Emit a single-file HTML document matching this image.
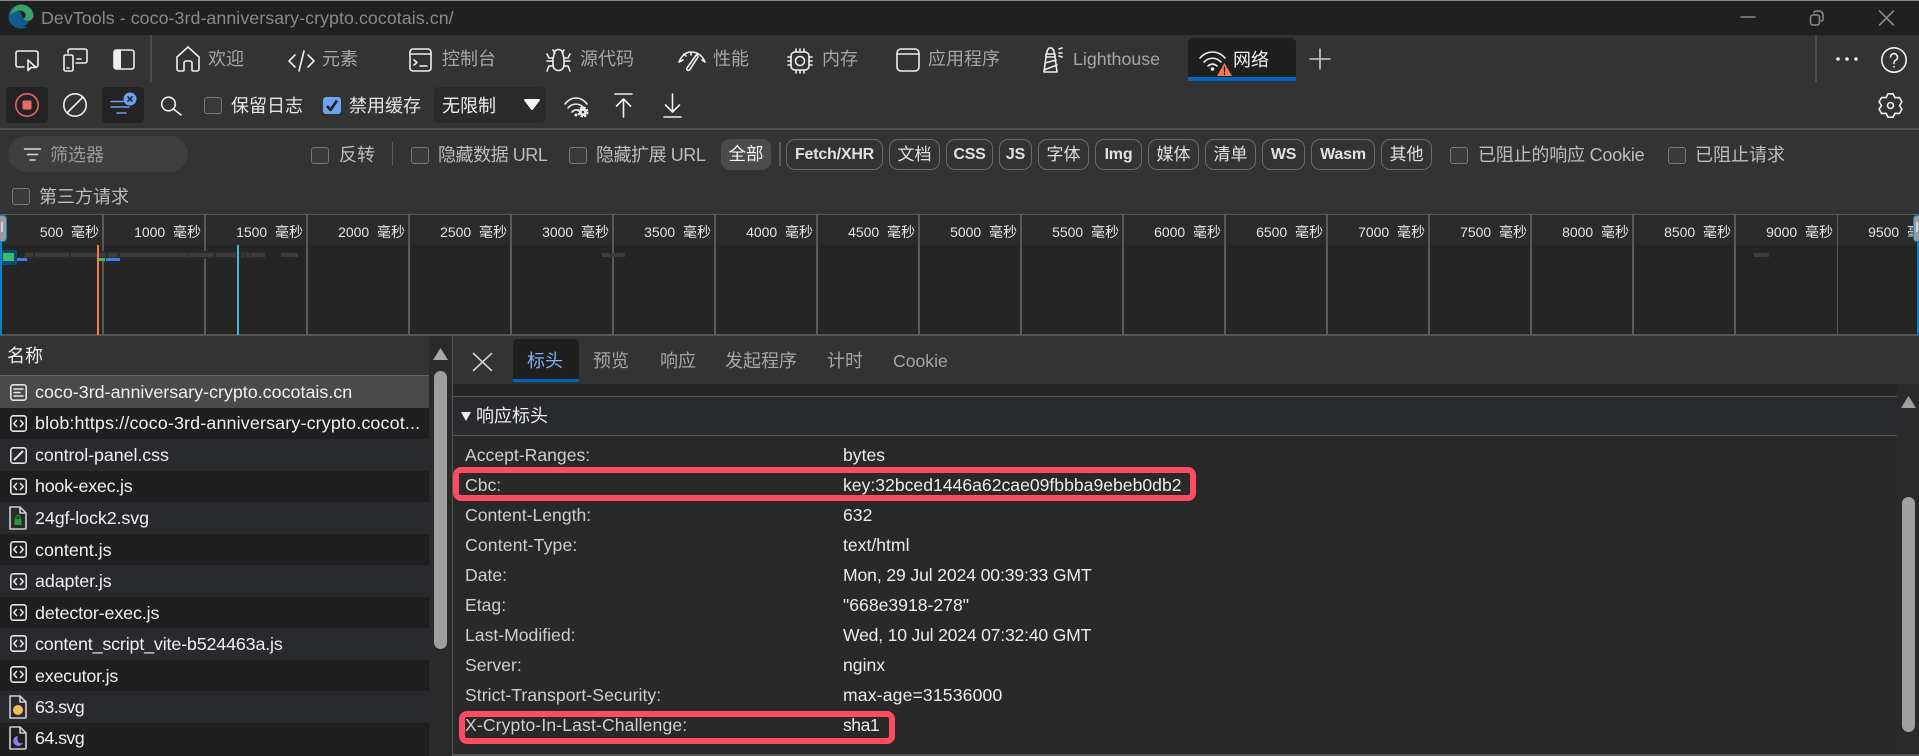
<!DOCTYPE html>
<html lang="zh"><head><meta charset="utf-8"><title>DevTools</title>
<style>
html,body{margin:0;padding:0;width:1919px;height:756px;overflow:hidden;background:#333}
body{position:relative;font-family:"Liberation Sans","Noto Sans CJK SC",sans-serif;font-size:18px;color:#e6e6e6}
div,span,svg{position:absolute;box-sizing:border-box}
span{white-space:pre;line-height:24px;height:24px}
span b{position:static;font-weight:normal}
svg{overflow:visible;fill:none;stroke:#eee;stroke-width:1.6;stroke-linecap:round;stroke-linejoin:round}
.g{color:#a6a6a6}.f{color:#bdbdbd}
.c{width:18px;height:17px;border:1.6px solid #7a7a7a;border-radius:3px;background:#3a3a3a}
.p{top:139px;height:31px;border:1px solid #6a6a6a;border-radius:9px;text-align:center;line-height:30px;color:#e0e0e0;font-size:17px;white-space:nowrap}
.pb{font-weight:bold;font-size:16px;letter-spacing:-.2px}
.v{top:215px;height:120px;width:2px;background:#5a5a5a}
.l{top:220px;width:100px;margin-left:-1px;text-align:right;font-size:14px;color:#e4e4e4;line-height:24px}
.b{top:253px;height:4px;background:#3c3c3c}
.r{left:0;width:429px;height:32px}
.n{left:35px;color:#f0f0f0;font-size:17.9px}
.k{left:465px;color:#cfcfcf;font-size:17.6px}
.w{left:843px;color:#ececec;font-size:17.6px}
.hl{border:6px solid #fb4c62;border-radius:8px}
</style></head><body>

<!-- title bar -->
<div style="left:0;top:0;width:1919px;height:35px;background:#202020;border-top:1px solid #8a8a8a"></div>
<svg style="left:8px;top:4px;stroke:none" width="26" height="25" viewBox="0 0 26 25">
<path fill="#0f5f8e" d="M13 .5C5.500 .5 .7 6 .5 12.500 .5 19.500 6.500 24.500 13 24.500c3 0 5.500-.8 7.500-2.300-4.500 1.500-10.500-.2-12-5.200-1-3.500 1-7 4-8.500C10 5.500 5 7 2.500 11 4 5 8.500 .5 13 .5z"/>
<path fill="#3aa06a" d="M13 .5c6.500 0 12 4.500 12.500 11 .2 3-2.500 5.500-6 5.500-2.200 0-4-1-4.500-2.500 2-.5 3-2 2.500-4C16.500 7 12 5.500 8 7.500 5 9 3 10 2 12 3 6 7.500 .5 13 .5z"/>
<path fill="#155a8a" d="M8.500 17c-1-3.500 1-7 4-8.500 1.500 1.500 1.500 4 2.500 6 1 1.500 3 2.500 5.500 2.500-1 3-3 5-6 5.500-3 .5-5.500-2.500-6-5.500z"/>
</svg>
<span style="left:41px;top:6px;color:#8a8a8a;font-size:17.8px;letter-spacing:.07px">DevTools - coco-3rd-anniversary-crypto.cocotais.cn/</span>
<svg style="left:1741px;top:10px;stroke:#8a8a8a" width="160" height="16" viewBox="0 0 160 16">
<path d="M0 7H14"/><rect x="69.500" y="5" width="9" height="10" rx="2.500"/><path d="M73 2.500c0-1 1-1.500 2-1.500h3c2 0 4 1.500 4 4v4c0 1-.5 2-1.500 2"/><path d="M138.500 1 152.500 15M152.500 1 138.500 15"/>
</svg>

<!-- tab bar -->
<div style="left:0;top:35px;width:1919px;height:47px;background:#333"></div>
<div style="left:150px;top:35px;width:2px;height:47px;background:#4c4c4c"></div>
<div style="left:1815px;top:35px;width:2px;height:47px;background:#4c4c4c"></div>
<svg style="left:15px;top:50px" width="24" height="22" viewBox="0 0 24 22"><path d="M9 17H3a2 2 0 0 1-2-2V3a2 2 0 0 1 2-2h18a2 2 0 0 1 2 2v12a2 2 0 0 1-2 2h-2"/><path d="M13 10v10.500l3-3h5z"/></svg>
<svg style="left:63px;top:48px" width="25" height="24" viewBox="0 0 25 24"><path d="M5 5V3a2 2 0 0 1 2-2h15a2 2 0 0 1 2 2v10a2 2 0 0 1-2 2H13"/><rect x="1" y="7" width="9" height="16" rx="1.500"/><path d="M4 20h2M14 11h4"/></svg>
<svg style="left:113px;top:49px" width="22" height="21" viewBox="0 0 22 21"><rect x="1" y="1" width="20" height="19" rx="2.500"/><path fill="#eee" stroke="none" d="M1 3a2 2 0 0 1 2-2h5v19H3a2 2 0 0 1-2-2z"/></svg>
<svg style="left:176px;top:46px" width="24" height="26" viewBox="0 0 24 26"><path d="M1 11 12 1l11 10v12a2 2 0 0 1-2 2h-4a1 1 0 0 1-1-1v-7a2 2 0 0 0-2-2h-4a2 2 0 0 0-2 2v7a1 1 0 0 1-1 1H3a2 2 0 0 1-2-2z"/></svg>
<span class="g" style="left:208px;top:47px">欢迎</span>
<svg style="left:288px;top:50px" width="27" height="22" viewBox="0 0 27 22"><path d="M7 5 1 11l6 6M20 5l6 6-6 6M16 1l-5 20"/></svg>
<span class="g" style="left:322px;top:47px">元素</span>
<svg style="left:409px;top:48px" width="23" height="24" viewBox="0 0 23 24"><rect x="1" y="1" width="21" height="22" rx="3"/><path d="M1 6h21M5 12l3 2.500L5 17M11 18h7"/></svg>
<span class="g" style="left:442px;top:47px">控制台</span>
<svg style="left:546px;top:47px" width="25" height="26" viewBox="0 0 25 26"><path d="M8 7a4.500 4.500 0 0 1 9 0v1l1 3v7a5.500 5.500 0 0 1-11 0v-7l1-3zM7 3 9 6M18 3l-2 3M1 7l2 4h4M24 7l-2 4h-4M1 14h6M24 14h-6M1 24l2-5h4M24 24l-2-5h-4"/></svg>
<span class="g" style="left:580px;top:47px">源代码</span>
<svg style="left:677px;top:49px" width="29" height="23" viewBox="0 0 29 23"><path d="M2 13C5 6 9 3 14 3c6 0 11 3 14 10M2 13l4-2M14 3v3M28 13l-3-2M7 5l2 2"/><path d="M20 5l-10 14c-1 2 1 3 2.500 2L21 8z"/></svg>
<span class="g" style="left:713px;top:47px">性能</span>
<svg style="left:787px;top:48px" width="26" height="26" viewBox="0 0 26 26"><rect x="4" y="4" width="18" height="18" rx="4"/><circle cx="13" cy="13" r="4.500"/><path d="M9 1v3M13 1v3M17 1v3M9 22v3M13 22v3M17 22v3M1 9h3M1 13h3M1 17h3M22 9h3M22 13h3M22 17h3"/></svg>
<span class="g" style="left:822px;top:47px">内存</span>
<svg style="left:896px;top:48px" width="24" height="24" viewBox="0 0 24 24"><rect x="1" y="1" width="22" height="22" rx="4"/><path d="M1 6h22"/></svg>
<span class="g" style="left:928px;top:47px">应用程序</span>
<svg style="left:1042px;top:46px" width="21" height="27" viewBox="0 0 21 27"><path d="M7 2h3l2 3v3H5V5zM4 8h9v3H4zM4 11h9l2 15H2zM3 17l11-3M2 24l13-5M17 3l3-1M17 7h3M17 10l3 1"/></svg>
<span class="g" style="left:1073px;top:47px;font-size:17.800px">Lighthouse</span>
<div style="left:1188px;top:38px;width:108px;height:43px;background:#1f1f1f;border-radius:5px 5px 0 0;border-bottom:4px solid #0067c0"></div>
<svg style="left:1199px;top:50px" width="27" height="22" viewBox="0 0 27 22"><path d="M1 8C8 0 19 0 26 8M5 12c5-5 12-5 17 0M9 16c3-2.500 6-2.500 9 0"/><circle cx="13.500" cy="19" r="1.800" fill="#eee" stroke="none"/></svg>
<svg style="left:1217px;top:63px;stroke:none" width="15" height="13" viewBox="0 0 15 13"><path fill="#f47d4d" d="M7.500 0 15 13H0z"/><path stroke="#222" stroke-width="1.300" d="M7.500 4v5M7.500 10.500v1"/></svg>
<span style="left:1233px;top:48px;color:#f2f2f2">网络</span>
<svg style="left:1310px;top:49px;stroke:#ccc" width="20" height="20" viewBox="0 0 20 20"><path d="M10 0V20M0 10H20"/></svg>
<svg style="left:1836px;top:57px;stroke:none;fill:#eee" width="22" height="4" viewBox="0 0 22 4"><circle cx="2" cy="2" r="1.800"/><circle cx="11" cy="2" r="1.800"/><circle cx="20" cy="2" r="1.800"/></svg>
<svg style="left:1881px;top:47px" width="26" height="26" viewBox="0 0 26 26"><circle cx="13" cy="13" r="12.200"/><path d="M9.500 10a3.500 3.500 0 1 1 5.500 3c-1.500 1-2 1.500-2 3.500M13 19.500v.5"/></svg>

<!-- toolbar -->
<div style="left:0;top:82px;width:1919px;height:48px;background:#333;border-bottom:2px solid #505050"></div>
<div style="left:6px;top:87px;width:42px;height:36px;background:#232323;border-radius:4px"></div>
<svg style="left:15px;top:93px;stroke:#e8645f" width="24" height="24" viewBox="0 0 24 24"><circle cx="12" cy="12" r="11.200"/><rect x="7.500" y="7.500" width="9" height="9" rx="1.500" fill="#f06a63" stroke="none"/></svg>
<svg style="left:63px;top:93px" width="24" height="24" viewBox="0 0 24 24"><circle cx="12" cy="12" r="11.200"/><path d="M4.500 19.500 19.500 4.500"/></svg>
<div style="left:102px;top:87px;width:42px;height:36px;background:#232323;border-radius:4px"></div>
<svg style="left:111px;top:93px;stroke:#6ea3ee" width="27" height="22" viewBox="0 0 27 22"><path d="M0 8.500H12M0 14H18M6 20H15"/><circle cx="19" cy="6" r="6.500" fill="#6ea3ee" stroke="none"/><path stroke="#1d2a3f" stroke-width="1.700" d="M17 4l4 4M21 4l-4 4"/></svg>
<svg style="left:160px;top:96px" width="23" height="20" viewBox="0 0 23 20"><circle cx="8.500" cy="8" r="6.800"/><path d="M13.500 13 21 19"/></svg>
<div class="c" style="left:204px;top:97px"></div>
<span style="left:231px;top:94px">保留日志</span>
<div style="left:323px;top:97px;width:18px;height:17px;background:#6ea3ee;border-radius:3px"></div>
<svg style="left:323px;top:97px;stroke:#17202e;stroke-width:2.600;stroke-linecap:butt" width="18" height="17" viewBox="0 0 18 17"><path d="M4 9l3.500 4L14 3.500"/></svg>
<span style="left:349px;top:94px">禁用缓存</span>
<div style="left:434px;top:87px;width:112px;height:36px;background:#2b2b2b;border-radius:4px"></div>
<span style="left:442px;top:94px;color:#f0f0f0">无限制</span>
<svg style="left:524px;top:99px;stroke:none" width="16" height="11" viewBox="0 0 16 11"><path fill="#f5f5f5" d="M1 0H15a1 1 0 0 1 .8 1.500L9 10.500a1.200 1.200 0 0 1-2 0L.2 1.500A1 1 0 0 1 1 0z"/></svg>
<svg style="left:564px;top:96px" width="26" height="22" viewBox="0 0 26 22"><path d="M1 8C7 0 17 0 23 8M4 12c4-5 11-5 15-1M8 16c2-2 4-2.500 6-2"/><circle cx="12" cy="19" r="1.500" fill="#eee" stroke="none"/><circle cx="19" cy="16" r="4" fill="#eee" stroke="#eee" stroke-width="3" stroke-dasharray="2 1.200" stroke-linecap="butt"/><circle cx="19" cy="16" r="1.300" fill="#333" stroke="none"/></svg>
<svg style="left:614px;top:93px" width="19" height="25" viewBox="0 0 19 25"><path d="M1 1H18M9.500 24V6M2.500 13l7-7 7 7"/></svg>
<svg style="left:663px;top:93px" width="19" height="25" viewBox="0 0 19 25"><path d="M1 24H18M9.500 1V19M2.500 12l7 7 7-7"/></svg>
<svg style="left:1878px;top:93px" width="25" height="25" viewBox="0 0 25 25"><circle cx="12.500" cy="12.500" r="3"/><path d="M10 .8H15L17 4.700 21.400 4.500 23.900 8.800 21.500 12.500 23.900 16.200 21.400 20.500 17 20.300 15 24.200H10L8 20.300 3.600 20.500 1.100 16.200 3.500 12.500 1.100 8.800 3.600 4.500 8 4.700z"/></svg>

<!-- filter row -->
<div style="left:0;top:130px;width:1919px;height:84px;background:#333"></div>
<div style="left:8px;top:136px;width:180px;height:36px;background:#3e3e3e;border-radius:18px"></div>
<svg style="left:24px;top:148px;stroke:#d8d8d8" width="17" height="13" viewBox="0 0 17 13"><path d="M.5 1H16.500M3.500 6.500H13.500M6 12h5"/></svg>
<span style="left:50px;top:143px;color:#9a9a9a">筛选器</span>
<div class="c" style="left:311px;top:147px"></div><span class="f" style="left:339px;top:143px">反转</span>
<div style="left:392px;top:142px;width:1px;height:24px;background:#5c5c5c"></div>
<div class="c" style="left:411px;top:147px"></div><span class="f" style="left:438px;top:143px;letter-spacing:-.45px">隐藏数据 URL</span>
<div class="c" style="left:569px;top:147px"></div><span class="f" style="left:596px;top:143px;letter-spacing:-.45px">隐藏扩展 URL</span>
<div style="left:721px;top:139px;width:50px;height:31px;background:#4b4b4b;border-radius:9px;text-align:center;line-height:31px;font-size:17.500px;color:#f5f5f5">全部</div>
<div style="left:779px;top:142px;width:2px;height:24px;background:#5c5c5c"></div>
<div class="p pb" style="left:786px;width:97px">Fetch/XHR</div>
<div class="p" style="left:889px;width:51px">文档</div>
<div class="p pb" style="left:946px;width:47px">CSS</div>
<div class="p pb" style="left:999px;width:33px">JS</div>
<div class="p" style="left:1038px;width:51px">字体</div>
<div class="p pb" style="left:1095px;width:47px">Img</div>
<div class="p" style="left:1148px;width:51px">媒体</div>
<div class="p" style="left:1205px;width:51px">清单</div>
<div class="p pb" style="left:1262px;width:43px">WS</div>
<div class="p pb" style="left:1311px;width:64px">Wasm</div>
<div class="p" style="left:1381px;width:51px">其他</div>
<div class="c" style="left:1450px;top:147px"></div><span class="f" style="left:1478px;top:143px;letter-spacing:-.2px">已阻止的响应 Cookie</span>
<div class="c" style="left:1668px;top:147px"></div><span class="f" style="left:1695px;top:143px">已阻止请求</span>
<div class="c" style="left:12px;top:188px"></div><span class="f" style="left:39px;top:185px">第三方请求</span>

<!-- timeline -->
<div style="left:0;top:214px;width:1919px;height:122px;background:#252525;border-top:1px solid #5a5a5a;border-bottom:2px solid #555"></div>
<div style="left:0;top:215px;width:1919px;height:30px;background:#2b2b2b"></div>
<div class="v" style="left:102px"></div><div class="v" style="left:204px"></div><div class="v" style="left:306px"></div><div class="v" style="left:408px"></div><div class="v" style="left:510px"></div><div class="v" style="left:612px"></div><div class="v" style="left:714px"></div><div class="v" style="left:816px"></div><div class="v" style="left:918px"></div><div class="v" style="left:1020px"></div><div class="v" style="left:1122px"></div><div class="v" style="left:1224px"></div><div class="v" style="left:1326px"></div><div class="v" style="left:1428px"></div><div class="v" style="left:1530px"></div><div class="v" style="left:1632px"></div><div class="v" style="left:1734px"></div><div class="v" style="left:1837px;width:1px"></div>
<span class="l" style="left:0">500  毫秒</span><span class="l" style="left:102px">1000  毫秒</span><span class="l" style="left:204px">1500  毫秒</span><span class="l" style="left:306px">2000  毫秒</span><span class="l" style="left:408px">2500  毫秒</span><span class="l" style="left:510px">3000  毫秒</span><span class="l" style="left:612px">3500  毫秒</span><span class="l" style="left:714px">4000  毫秒</span><span class="l" style="left:816px">4500  毫秒</span><span class="l" style="left:918px">5000  毫秒</span><span class="l" style="left:1020px">5500  毫秒</span><span class="l" style="left:1122px">6000  毫秒</span><span class="l" style="left:1224px">6500  毫秒</span><span class="l" style="left:1326px">7000  毫秒</span><span class="l" style="left:1428px">7500  毫秒</span><span class="l" style="left:1530px">8000  毫秒</span><span class="l" style="left:1632px">8500  毫秒</span><span class="l" style="left:1734px">9000  毫秒</span><span class="l" style="left:1836px">9500  毫秒</span>
<div style="left:24px;top:251px;width:241px;height:8px;background:#2b2b2b"></div>
<div class="b" style="left:25px;width:8px"></div><div class="b" style="left:35px;width:34px"></div><div class="b" style="left:71px;width:35px"></div><div class="b" style="left:108px;width:10px"></div><div class="b" style="left:120px;width:68px"></div><div class="b" style="left:189px;width:25px"></div><div class="b" style="left:216px;width:20px"></div><div class="b" style="left:242px;width:2px"></div><div class="b" style="left:246px;width:4px"></div><div class="b" style="left:251px;width:14px"></div><div class="b" style="left:281px;width:17px"></div><div class="b" style="left:602px;width:8px"></div><div class="b" style="left:611px;width:14px"></div><div class="b" style="left:1754px;width:15px"></div>
<div style="left:1px;top:250px;width:16px;height:15px;background:#0a4c78"></div>
<div style="left:3px;top:253px;width:11px;height:8px;background:#3cba6a"></div>
<div style="left:17px;top:258px;width:10px;height:3px;background:#3f7fe8"></div>
<div style="left:99px;top:258px;width:6px;height:3px;background:#3cba6a"></div>
<div style="left:106px;top:258px;width:14px;height:3px;background:#3f7fe8"></div>
<div style="left:97px;top:245px;width:2px;height:90px;background:#f47f3e"></div>
<div style="left:237px;top:245px;width:2px;height:90px;background:#40b6dc"></div>
<div style="left:0;top:240px;width:2px;height:95px;background:#0a84c4"></div>
<div style="left:1917px;top:240px;width:2px;height:95px;background:#0a84c4"></div>
<div style="left:0;top:215px;width:7px;height:27px;background:#9a9a9a;border:1px solid #0a84c4;border-left:0;border-radius:0 4px 4px 0"></div>
<div style="left:1px;top:222px;width:2px;height:10px;background:#c9d8f0"></div>
<div style="left:1913px;top:215px;width:6px;height:27px;background:#9a9a9a;border:1px solid #0a84c4;border-right:0;border-radius:4px 0 0 4px"></div>
<div style="left:1916px;top:222px;width:2px;height:10px;background:#c9d8f0"></div>

<!-- list -->
<div style="left:0;top:336px;width:429px;height:39px;background:#333"></div>
<span style="left:7px;top:344px;color:#f2f2f2">名称</span>
<div style="left:429px;top:336px;width:23px;height:420px;background:#2a2a2a"></div>
<svg style="left:433px;top:348px;stroke:none" width="15" height="12" viewBox="0 0 15 12"><path fill="#a8a8a8" d="M7.500 0 15 12H0z"/></svg>
<div style="left:434px;top:371px;width:13px;height:278px;background:#9e9e9e;border-radius:7px"></div>
<div style="left:452px;top:336px;width:1px;height:420px;background:#555"></div>
<div class="r" style="top:375px;height:33px;background:#4a4a4a;border-top:1px solid #666"></div>
<div class="r" style="top:408px;background:#1f1f1f"></div><div class="r" style="top:439px;background:#292a2d"></div>
<div class="r" style="top:471px;background:#1f1f1f"></div><div class="r" style="top:502px;background:#292a2d"></div>
<div class="r" style="top:534px;background:#1f1f1f"></div><div class="r" style="top:565px;background:#292a2d"></div>
<div class="r" style="top:597px;background:#1f1f1f"></div><div class="r" style="top:628px;background:#292a2d"></div>
<div class="r" style="top:660px;background:#1f1f1f"></div><div class="r" style="top:691px;background:#292a2d"></div>
<div class="r" style="top:723px;height:33px;background:#1f1f1f"></div>
<svg style="left:10px;top:384px;stroke:#e4e4e4" width="17" height="17" viewBox="0 0 17 17"><rect x=".8" y=".8" width="15.400" height="15.400" rx="2.500"/><path d="M4 5h9M4 8.500h6M4 12h9"/></svg>
<span class="n" style="top:380px">coco-3rd-anniversary-crypto.cocotais.cn</span>
<svg style="left:10px;top:415px;stroke:#e4e4e4" width="17" height="17" viewBox="0 0 17 17"><rect x=".8" y=".8" width="15.400" height="15.400" rx="2.500"/><path d="M6.500 5.500 3.800 8.500l2.700 3M10.500 5.500l2.700 3-2.700 3"/></svg>
<span class="n" style="top:411px;letter-spacing:.15px">blob:https://coco-3rd-anniversary-crypto.cocot...</span>
<svg style="left:10px;top:447px;stroke:#e4e4e4" width="17" height="17" viewBox="0 0 17 17"><rect x=".8" y=".8" width="15.400" height="15.400" rx="2.500"/><path stroke-width="2" d="M4.500 12.500 7 10M8 9l4.500-4.500"/></svg>
<span class="n" style="top:443px;letter-spacing:-.08px">control-panel.css</span>
<svg style="left:10px;top:478px;stroke:#e4e4e4" width="17" height="17" viewBox="0 0 17 17"><rect x=".8" y=".8" width="15.400" height="15.400" rx="2.500"/><path d="M6.500 5.500 3.800 8.500l2.700 3M10.500 5.500l2.700 3-2.700 3"/></svg>
<span class="n" style="top:474px;letter-spacing:-.25px">hook-exec.js</span>
<svg style="left:9px;top:506px;stroke:#cfcfcf" width="18" height="24" viewBox="0 0 18 24"><path d="M1 1h10l6 6v15a1 1 0 0 1-1 1H1zM11 1v6h6"/><rect x="5.500" y="13" width="7" height="6" fill="#1e9e32" stroke="none"/><path stroke="#1e9e32" stroke-width="1.300" d="M7 13v-1.500a2 2 0 0 1 4 0V13"/></svg>
<span class="n" style="top:506px;letter-spacing:-.1px">24gf-lock2.svg</span>
<svg style="left:10px;top:541px;stroke:#e4e4e4" width="17" height="17" viewBox="0 0 17 17"><rect x=".8" y=".8" width="15.400" height="15.400" rx="2.500"/><path d="M6.500 5.500 3.800 8.500l2.700 3M10.500 5.500l2.700 3-2.700 3"/></svg>
<span class="n" style="top:538px">content.js</span>
<svg style="left:10px;top:573px;stroke:#e4e4e4" width="17" height="17" viewBox="0 0 17 17"><rect x=".8" y=".8" width="15.400" height="15.400" rx="2.500"/><path d="M6.500 5.500 3.800 8.500l2.700 3M10.500 5.500l2.700 3-2.700 3"/></svg>
<span class="n" style="top:569px;letter-spacing:-.1px">adapter.js</span>
<svg style="left:10px;top:604px;stroke:#e4e4e4" width="17" height="17" viewBox="0 0 17 17"><rect x=".8" y=".8" width="15.400" height="15.400" rx="2.500"/><path d="M6.500 5.500 3.800 8.500l2.700 3M10.500 5.500l2.700 3-2.700 3"/></svg>
<span class="n" style="top:601px;letter-spacing:-.12px">detector-exec.js</span>
<svg style="left:10px;top:635px;stroke:#e4e4e4" width="17" height="17" viewBox="0 0 17 17"><rect x=".8" y=".8" width="15.400" height="15.400" rx="2.500"/><path d="M6.500 5.500 3.800 8.500l2.700 3M10.500 5.500l2.700 3-2.700 3"/></svg>
<span class="n" style="top:632px;letter-spacing:-.16px">content_script_vite-b524463a.js</span>
<svg style="left:10px;top:666px;stroke:#e4e4e4" width="17" height="17" viewBox="0 0 17 17"><rect x=".8" y=".8" width="15.400" height="15.400" rx="2.500"/><path d="M6.500 5.500 3.800 8.500l2.700 3M10.500 5.500l2.700 3-2.700 3"/></svg>
<span class="n" style="top:664px;letter-spacing:-.22px">executor.js</span>
<svg style="left:9px;top:695px;stroke:#cfcfcf" width="18" height="24" viewBox="0 0 18 24"><path d="M1 1h10l6 6v15a1 1 0 0 1-1 1H1zM11 1v6h6"/><circle cx="9" cy="15" r="5" fill="#f0bd5c" stroke="none"/></svg>
<span class="n" style="top:695px;letter-spacing:-.6px">63.svg</span>
<svg style="left:9px;top:726px;stroke:#cfcfcf" width="18" height="24" viewBox="0 0 18 24"><path d="M1 1h10l6 6v15a1 1 0 0 1-1 1H1zM11 1v6h6"/><path fill="#8f7cf0" stroke="none" d="M9 10a5 5 0 1 0 5 6.500c-1 .8-2.500 1-3.800.3C8.500 16 8 12 9 10z"/></svg>
<span class="n" style="top:726px;letter-spacing:-.6px">64.svg</span>

<!-- right pane -->
<div style="left:453px;top:336px;width:1466px;height:48px;background:#333"></div>
<div style="left:453px;top:384px;width:1466px;height:12px;background:#262626"></div>
<div style="left:453px;top:396px;width:1444px;height:40px;background:#292a2d;border-top:1px solid #5c5c5c;border-bottom:1px solid #5c5c5c"></div>
<div style="left:453px;top:436px;width:1444px;height:318px;background:#292929"></div>
<div style="left:453px;top:754px;width:1466px;height:2px;background:#555"></div>
<div style="left:1897px;top:384px;width:22px;height:370px;background:#2a2a2a"></div>
<svg style="left:1901px;top:396px;stroke:none" width="15" height="12" viewBox="0 0 15 12"><path fill="#a0a0a0" d="M7.500 0 15 12H0z"/></svg>
<div style="left:1902px;top:497px;width:13px;height:235px;background:#a0a0a0;border-radius:7px"></div>
<svg style="left:473px;top:353px;stroke:#cfcfcf" width="19" height="18" viewBox="0 0 19 18"><path d="M.5 .5 18.500 17.500M18.500 .5 .5 17.500"/></svg>
<div style="left:513px;top:339px;width:66px;height:43px;background:#1f1f1f;border-radius:5px 5px 0 0;border-bottom:3px solid #0067c0"></div>
<span style="left:527px;top:349px;color:#83aef0">标头</span>
<span class="g" style="left:593px;top:349px">预览</span>
<span class="g" style="left:660px;top:349px">响应</span>
<span class="g" style="left:725px;top:349px">发起程序</span>
<span class="g" style="left:827px;top:349px">计时</span>
<span class="g" style="left:893px;top:349px;font-size:17.600px">Cookie</span>
<svg style="left:461px;top:412px;stroke:none" width="10" height="9" viewBox="0 0 10 9"><path fill="#eee" d="M0 0H10L5 9z"/></svg>
<span style="left:476px;top:404px;color:#eee">响应标头</span>
<span class="k" style="top:443px">Accept-Ranges:</span><span class="w" style="top:443px">bytes</span>
<span class="k" style="top:473px">Cbc:</span><span class="w" style="top:473px">key:32bced1446a62cae09fbbba9ebeb0db2</span>
<span class="k" style="top:503px">Content-Length:</span><span class="w" style="top:503px">632</span>
<span class="k" style="top:533px;letter-spacing:.15px">Content-Type:</span><span class="w" style="top:533px">text/html</span>
<span class="k" style="top:563px">Date:</span><span class="w" style="top:563px;letter-spacing:-.13px">Mon, 29 Jul 2024 00:39:33 GMT</span>
<span class="k" style="top:593px">Etag:</span><span class="w" style="top:593px">"668e3918-278"</span>
<span class="k" style="top:623px">Last-Modified:</span><span class="w" style="top:623px;letter-spacing:-.2px">Wed, 10 Jul 2024 07:32:40 GMT</span>
<span class="k" style="top:653px">Server:</span><span class="w" style="top:653px">nginx</span>
<span class="k" style="top:683px;letter-spacing:.05px">Strict-Transport-Security:</span><span class="w" style="top:683px;letter-spacing:.15px">max-age=31536000</span>
<span class="k" style="top:713px;letter-spacing:.12px">X-Crypto-In-Last-Challenge:</span><span class="w" style="top:713px;letter-spacing:-.5px">sha1</span>
<div class="hl" style="left:453px;top:467px;width:743px;height:34px"></div>
<div class="hl" style="left:459px;top:711px;width:436px;height:33px"></div>
</body></html>
